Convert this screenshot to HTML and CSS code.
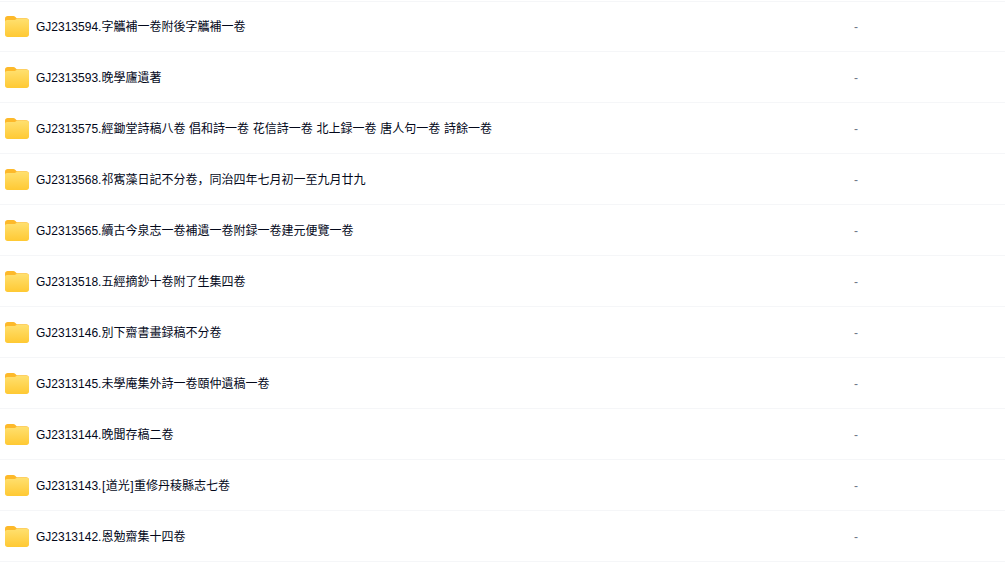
FILE: index.html
```html
<!DOCTYPE html>
<html lang="zh-Hans">
<head>
<meta charset="utf-8">
<title>文件列表</title>
<link rel="stylesheet" href="styles.css">
</head>
<body>
<svg class="defs" width="0" height="0" aria-hidden="true">
  <defs>
    <linearGradient id="folderFront" x1="0" y1="0" x2="0" y2="1">
      <stop offset="0" stop-color="#ffe06f"/>
      <stop offset="1" stop-color="#ffc933"/>
    </linearGradient>
    <symbol id="folder" viewBox="0 0 24 22">
      <path d="M0 3.700C0 2 1.100 1 2.800 1h5.400c1 0 1.600.3 2.200 .9l1.300 1.300h9.400C23 3.200 24 4.300 24 6v5H0z" fill="#fdb92a"/>
      <path d="M0 7c0-1.200.9-1.900 2-1.900h7.200c.9 0 1.300-.3 1.900-.8l.6-.5h9.700C23 3.800 24 4.900 24 6.500v13c0 1.500-1 2.500-2.600 2.500H2.600C1 22 0 21 0 19.500z" fill="url(#folderFront)"/>
    </symbol>
  </defs>
</svg>
<ul class="list">
  <li class="row"><svg class="icon"><use href="#folder"/></svg><span class="name">GJ2313594.字觿補一卷附後字觿補一卷</span><span class="size">-</span></li>
  <li class="row"><svg class="icon"><use href="#folder"/></svg><span class="name">GJ2313593.晚學廬遺著</span><span class="size">-</span></li>
  <li class="row"><svg class="icon"><use href="#folder"/></svg><span class="name">GJ2313575.經鋤堂詩稿八卷 倡和詩一卷 花信詩一卷 北上録一卷 唐人句一卷 詩餘一卷</span><span class="size">-</span></li>
  <li class="row"><svg class="icon"><use href="#folder"/></svg><span class="name">GJ2313568.祁寯藻日記不分卷，同治四年七月初一至九月廿九</span><span class="size">-</span></li>
  <li class="row"><svg class="icon"><use href="#folder"/></svg><span class="name">GJ2313565.續古今泉志一卷補遺一卷附録一卷建元便覽一卷</span><span class="size">-</span></li>
  <li class="row"><svg class="icon"><use href="#folder"/></svg><span class="name">GJ2313518.五經摘鈔十卷附了生集四卷</span><span class="size">-</span></li>
  <li class="row"><svg class="icon"><use href="#folder"/></svg><span class="name">GJ2313146.別下齋書畫録稿不分卷</span><span class="size">-</span></li>
  <li class="row"><svg class="icon"><use href="#folder"/></svg><span class="name">GJ2313145.未學庵集外詩一卷頤仲遺稿一卷</span><span class="size">-</span></li>
  <li class="row"><svg class="icon"><use href="#folder"/></svg><span class="name">GJ2313144.晚聞存稿二卷</span><span class="size">-</span></li>
  <li class="row"><svg class="icon"><use href="#folder"/></svg><span class="name">GJ2313143.<span class="bracket">[</span>道光<span class="bracket">]</span>重修丹稜縣志七卷</span><span class="size">-</span></li>
  <li class="row"><svg class="icon"><use href="#folder"/></svg><span class="name">GJ2313142.恩勉齋集十四卷</span><span class="size">-</span></li>
</ul>
</body>
</html>
```
FILE: styles.css
```css
html, body {
  margin: 0;
  padding: 0;
  background: #fff;
  overflow: hidden;
}
body {
  font-family: "Liberation Sans", "Noto Sans CJK SC", sans-serif;
  font-size: 12px;
  color: #03081a;
}
.defs {
  display: block;
  height: 0;
}
.list {
  list-style: none;
  margin: 1px 0 0;
  padding: 0;
  border-top: 1px solid #f5f6f8;
}
.row {
  display: flex;
  align-items: center;
  height: 50px;
  padding-left: 5px;
  border-bottom: 1px solid #f5f6f8;
}
.row:first-child {
  height: 48px;
  padding-bottom: 1px;
}
.icon {
  flex: none;
  width: 24px;
  height: 22px;
}
.name {
  flex: none;
  width: 818px;
  margin-left: 7px;
  padding-top: 2px;
  white-space: nowrap;
  line-height: 20px;
  word-spacing: 0.4px;
}
.bracket {
  margin: 0 0.5px;
}
.size {
  padding-top: 2px;
  color: #6f7687;
}
```
